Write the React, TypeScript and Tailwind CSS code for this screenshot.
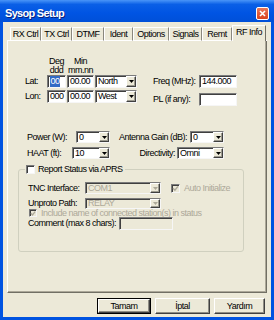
import React from "react";

const SUNKEN =
  "border border-t-[#7b7b7b] border-l-[#7b7b7b] border-b-[#f6f6f6] border-r-[#f6f6f6] shadow-[inset_1px_1px_0_#3f3f3f]";

function Arrow({ disabled }: { disabled?: boolean }) {
  return (
    <div className="w-[10px] shrink-0 flex items-center justify-center bg-[#ECE9D8] border border-t-white border-l-white border-b-[#404040] border-r-[#404040] shadow-[inset_-1px_-1px_0_#9d9b90]">
      <svg width="5" height="3" viewBox="0 0 5 3">
        <path d="M0 0H5L2.5 3Z" fill={disabled ? "#ACA899" : "#000"} />
      </svg>
    </div>
  );
}

function Combo({ cls, value, disabled }: { cls: string; value: string; disabled?: boolean }) {
  return (
    <div
      className={`flex items-stretch shrink-0 ${SUNKEN} ${cls} ${
        disabled ? "bg-[#ECE9D8] text-[#ACA899]" : "bg-white text-black"
      }`}
    >
      <div className="flex-1 flex items-center pl-[2px] overflow-hidden whitespace-nowrap">{value}</div>
      <Arrow disabled={disabled} />
    </div>
  );
}

function Field({
  cls,
  children,
  disabled,
}: {
  cls: string;
  children?: React.ReactNode;
  disabled?: boolean;
}) {
  return (
    <div
      className={`flex items-center shrink-0 pl-[2px] whitespace-nowrap ${SUNKEN} ${cls} ${
        disabled ? "bg-[#ECE9D8]" : "bg-white"
      }`}
    >
      {children}
    </div>
  );
}

function Check({ checked, disabled, cls }: { checked?: boolean; disabled?: boolean; cls: string }) {
  return (
    <div
      className={`shrink-0 flex items-center justify-center ${SUNKEN} ${cls} ${
        disabled ? "bg-[#ECE9D8]" : "bg-white"
      }`}
    >
      {checked && (
        <svg width="7" height="7" viewBox="0 0 7 7">
          <path d="M1 3.2L2.9 5.2L6 1.4" stroke={disabled ? "#ACA899" : "#000"} strokeWidth="1.5" fill="none" />
        </svg>
      )}
    </div>
  );
}

function Tab({ label, cls }: { label: string; cls: string }) {
  return (
    <div
      className={`h-[14px] shrink-0 flex items-center justify-center border border-t-white border-l-white border-r-[#8a887e] border-b-white whitespace-nowrap ${cls}`}
    >
      {label}
    </div>
  );
}

function Button({ label, cls, def }: { label: string; cls: string; def?: boolean }) {
  const inner = (
    <div className="w-full h-full flex items-center justify-center bg-[#ECE9D8] border border-t-white border-l-white border-b-[#404040] border-r-[#404040] shadow-[inset_-1px_-1px_0_#8f8d84]">
      {label}
    </div>
  );
  return def ? (
    <div className={`h-[16px] border border-black ${cls}`}>{inner}</div>
  ) : (
    <div className={`h-[16px] ${cls}`}>{inner}</div>
  );
}

export default function App() {
  return (
    <div className="w-[274px] h-[320px] overflow-hidden flex flex-col bg-[#0053E1] font-['Liberation_Sans',Arial,sans-serif] text-[9px] tracking-[-0.5px] text-black leading-none">
      {/* Title bar */}
      <div className="h-[22px] shrink-0 flex items-center pt-[4px] pl-[5px] pr-[5px] bg-[linear-gradient(to_bottom,#4A95F8_0%,#0A5FE6_20%,#0054E3_60%,#0050D8_100%)]">
        <span className="text-white font-bold text-[11px] tracking-[-0.7px] [text-shadow:1px_1px_0_#0a1f7a]">
          Sysop Setup
        </span>
        <div className="ml-auto w-[13px] h-[13px] rounded-[2px] border border-white bg-[linear-gradient(to_bottom,#E9785A,#D9421D)] flex items-center justify-center">
          <svg width="7" height="7" viewBox="0 0 7 7">
            <path d="M1 1L6 6M6 1L1 6" stroke="#fff" strokeWidth="1.6" />
          </svg>
        </div>
      </div>

      {/* Client area */}
      <div className="flex-1 mx-[3px] mb-[3px] bg-[#ECE9D8] flex flex-col pt-[3px]">
        {/* Tabs */}
        <div className="h-[16px] mx-[4px] flex items-end shrink-0">
          <div className="w-[3px] h-[1px] bg-white shrink-0" />
          <Tab label="RX Ctrl" cls="w-[31px]" />
          <Tab label="TX Ctrl" cls="w-[31px]" />
          <Tab label="DTMF" cls="w-[32px]" />
          <Tab label="Ident" cls="w-[29px]" />
          <Tab label="Options" cls="w-[36px]" />
          <Tab label="Signals" cls="w-[33px]" />
          <Tab label="Remt" cls="w-[30px]" />
          <div className="w-[34px] h-[16px] shrink-0 flex items-center justify-center border-t border-l border-r border-t-white border-l-white border-r-[#716F64] whitespace-nowrap pb-[2px]">
            RF Info
          </div>
          <div className="flex-1 h-[1px] bg-white" />
        </div>

        {/* Panel */}
        <div className="h-[252px] mx-[4px] shrink-0 flex flex-col items-start border-l border-l-white border-r border-r-[#716F64] border-b border-b-[#716F64] shadow-[inset_-1px_-1px_0_#ACA899]">
          {/* Section 1 */}
          <div className="flex mt-[16px]">
            <div className="flex flex-col ml-[17px]">
              <div className="flex h-[18px]">
                <div className="w-[22px]" />
                <div className="w-[19px] flex flex-col items-center leading-[9px]">
                  <span>Deg</span>
                  <span>ddd</span>
                </div>
                <div className="w-[1px]" />
                <div className="w-[27px] flex flex-col items-center leading-[9px]">
                  <span>Min</span>
                  <span>mm.nn</span>
                </div>
              </div>
              <div className="flex items-center h-[13px] gap-[1px]">
                <div className="w-[21px]">Lat:</div>
                <Field cls="w-[19px] h-[13px]">
                  <span className="bg-[#316AC5] text-white px-[0.5px] py-[1px]">00</span>
                </Field>
                <Field cls="w-[27px] h-[13px]">00.00</Field>
                <Combo cls="w-[42px] h-[13px]" value="North" />
              </div>
              <div className="mt-[2px] flex items-center h-[13px] gap-[1px]">
                <div className="w-[21px]">Lon:</div>
                <Field cls="w-[19px] h-[13px]">000</Field>
                <Field cls="w-[27px] h-[13px]">00.00</Field>
                <Combo cls="w-[42px] h-[13px]" value="West" />
              </div>
            </div>
            <div className="flex flex-col ml-[16px] mt-[18px]">
              <div className="flex items-center h-[13px]">
                <div className="w-[46px] whitespace-nowrap">Freq (MHz):</div>
                <Field cls="w-[38px] h-[13px]">144.000</Field>
              </div>
              <div className="mt-[5px] flex items-center h-[13px]">
                <div className="w-[46px] whitespace-nowrap">PL (if any):</div>
                <Field cls="w-[38px] h-[13px]" />
              </div>
            </div>
          </div>

          {/* Power */}
          <div className="flex items-center h-[12px] mt-[25px] ml-[19px]">
            <div className="w-[49px] whitespace-nowrap">Power (W):</div>
            <Combo cls="w-[34px] h-[12px]" value="0" />
            <div className="w-[80px] text-right pr-[3px] whitespace-nowrap">Antenna Gain (dB):</div>
            <Combo cls="w-[34px] h-[12px]" value="0" />
          </div>
          {/* HAAT */}
          <div className="flex items-center h-[12px] mt-[4px] ml-[19px]">
            <div className="w-[45px] whitespace-nowrap">HAAT (ft):</div>
            <Combo cls="w-[38px] h-[12px]" value="10" />
            <div className="w-[67px] text-right pr-[2px] whitespace-nowrap">Directivity:</div>
            <Combo cls="w-[47px] h-[12px]" value="Omni" />
          </div>

          {/* APRS group */}
          <fieldset className="mt-[5px] ml-[10px] w-[226px] border border-[#D0D0BF] rounded-[3px] pb-[21px] flex flex-col">
            <legend className="ml-[6px] px-[1px] h-[10px] flex items-center gap-[3px]">
              <Check cls="w-[9px] h-[9px]" />
              <span className="whitespace-nowrap pr-[1px]">Report Status via APRS</span>
            </legend>
            <div className="mt-[8px] ml-[9px] flex items-center h-[12px]">
              <div className="w-[57px] whitespace-nowrap">TNC Interface:</div>
              <Combo cls="w-[76px] h-[12px]" value="COM1" disabled />
              <Check cls="w-[9px] h-[9px] ml-[10px]" checked disabled />
              <span className="ml-[4px] text-[#ACA899] whitespace-nowrap">Auto Initialize</span>
            </div>
            <div className="mt-[4px] ml-[9px] flex items-center h-[11px]">
              <div className="w-[57px] whitespace-nowrap">Unproto Path:</div>
              <Combo cls="w-[76px] h-[11px]" value="RELAY" disabled />
            </div>
            <div className="ml-[10px] flex items-center h-[8px]">
              <Check cls="w-[8px] h-[8px]" checked disabled />
              <span className="ml-[4px] text-[#ACA899] whitespace-nowrap">
                Include name of connected station(s) in status
              </span>
            </div>
            <div className="ml-[9px] flex items-center h-[13px]">
              <div className="w-[91px] whitespace-nowrap">Comment (max 8 chars):</div>
              <Field cls="w-[54px] h-[13px]" disabled />
            </div>
          </fieldset>
        </div>

        {/* Buttons */}
        <div className="mt-[5px] h-[16px] flex justify-end gap-[4px] pr-[6px] shrink-0">
          <Button label="Tamam" cls="w-[54px]" def />
          <Button label="İptal" cls="w-[55px]" />
          <Button label="Yardım" cls="w-[51px]" />
        </div>
      </div>
    </div>
  );
}
